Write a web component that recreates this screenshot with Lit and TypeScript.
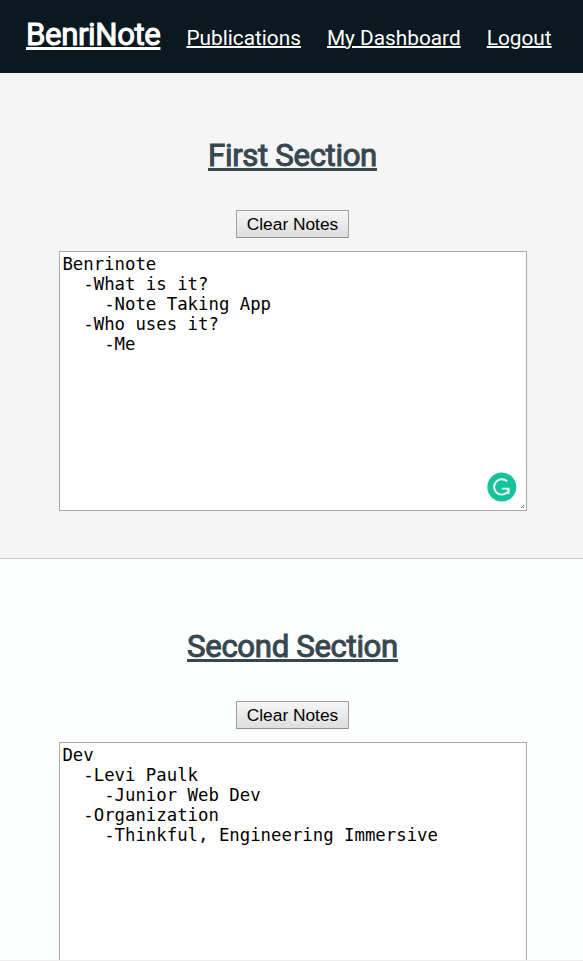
import { LitElement, html, css } from "lit";

class NoteSection extends LitElement {
  static properties = {
    heading: { type: String },
    text: { type: String },
    badge: { type: Boolean },
  };
  declare heading: string;
  declare text: string;
  declare badge: boolean;

  static styles = css`
    :host { display: flex; flex-direction: column; align-items: center; }
    .title {
      margin: 1px 0 0; padding-left: 2px;
      font: 400 31.2px/36px Roboto, sans-serif; letter-spacing: -0.36px;
      -webkit-text-stroke: 1px #37474f;
      color: #37474f; text-decoration: underline; text-decoration-thickness: 3px;
      text-underline-offset: 2px; text-decoration-skip-ink: none;
    }
    .clear {
      box-sizing: border-box; width: 113px; height: 28px; margin: 36px 0 13px 2px; padding: 0;
      border: 1px solid #a0a0a0; border-bottom-color: #8e8e8e; border-radius: 1px;
      background: linear-gradient(#f6f6f6, #dedede); color: #000;
      font: 17.33px/24px "Liberation Sans", Arial, sans-serif;
    }
    .wrap { position: relative; margin-left: 3px; }
    .notes {
      display: block; box-sizing: border-box; width: 468px; height: 260px; margin: 0; padding: 2px 2.4px;
      border: 1px solid #a9a9a9; border-radius: 0; background: #fff; color: #000;
      font: 17.33px/20px "DejaVu Sans Mono", monospace;
      resize: none; overflow: hidden; outline: none;
    }
    .badge { position: absolute; left: 428px; top: 221px; }
    .grip { position: absolute; right: 3px; bottom: 3px; }
  `;

  constructor() {
    super();
    this.heading = "";
    this.text = "";
    this.badge = false;
  }

  render() {
    return html`
      <h2 class="title">${this.heading}</h2>
      <button class="clear">Clear Notes</button>
      <div class="wrap">
        <textarea class="notes" spellcheck="false" .value=${this.text}></textarea>
        ${this.badge
          ? html`<svg class="badge" width="30" height="30" viewBox="0 0 30 30">
              <circle cx="14.8" cy="15" r="14.5" fill="#15c39a" />
              <path d="M20.2 9.4A7.7 7.7 0 1 0 20.4 20.2M15 16.6h6.4V22" fill="none" stroke="#fff" stroke-width="1.9" />
              <path d="M18.6 16h3.8v4.6z" fill="#fff" />
            </svg>`
          : ""}
        <svg class="grip" width="3" height="3" viewBox="0 0 3 3" shape-rendering="crispEdges">
          <path d="M0 2h1v1h-1zM1 1h1v1h-1zM2 0h1v1h-1zM2 2h1v1h-1z" fill="#777" />
        </svg>
      </div>
    `;
  }
}

class AppRoot extends LitElement {
  static styles = css`
    :host { display: flex; flex-direction: column; box-sizing: border-box; height: 961px; overflow: hidden; background: #fcfffe; border-bottom: 1px solid #eee; }
    .nav {
      display: flex; flex: none; align-items: flex-start; gap: 26px; box-sizing: border-box; height: 73px;
      padding: 17px 0 0 26px; background: #0a1820; color: #fff;
      font: 400 20.8px/36px Roboto, sans-serif; white-space: nowrap;
    }
    .nav a { color: inherit; text-decoration: underline; text-decoration-thickness: 2px; }
    .nav .brand { font-size: 31.2px; letter-spacing: -0.41px; -webkit-text-stroke: 1px #fff; text-decoration-thickness: 3px; text-underline-offset: 2px; }
    .nav .link { margin-top: 3px; }
    .first { flex: none; box-sizing: border-box; height: 486px; padding-top: 64px; background: #f5f5f5; border-bottom: 1px solid #c9c9c9; }
    .second { flex: none; padding-top: 69px; }
  `;

  render() {
    return html`
      <nav class="nav">
        <a class="brand" href="#">BenriNote</a>
        <a class="link" href="#">Publications</a>
        <a class="link" href="#">My Dashboard</a>
        <a class="link" href="#">Logout</a>
      </nav>
      <note-section class="first" heading="First Section" badge
        .text=${"Benrinote\n  -What is it?\n    -Note Taking App\n  -Who uses it?\n    -Me"}></note-section>
      <note-section class="second" heading="Second Section"
        .text=${"Dev\n  -Levi Paulk\n    -Junior Web Dev\n  -Organization\n    -Thinkful, Engineering Immersive"}></note-section>
    `;
  }
}

customElements.define("note-section", NoteSection);
customElements.define("app-root", AppRoot);
